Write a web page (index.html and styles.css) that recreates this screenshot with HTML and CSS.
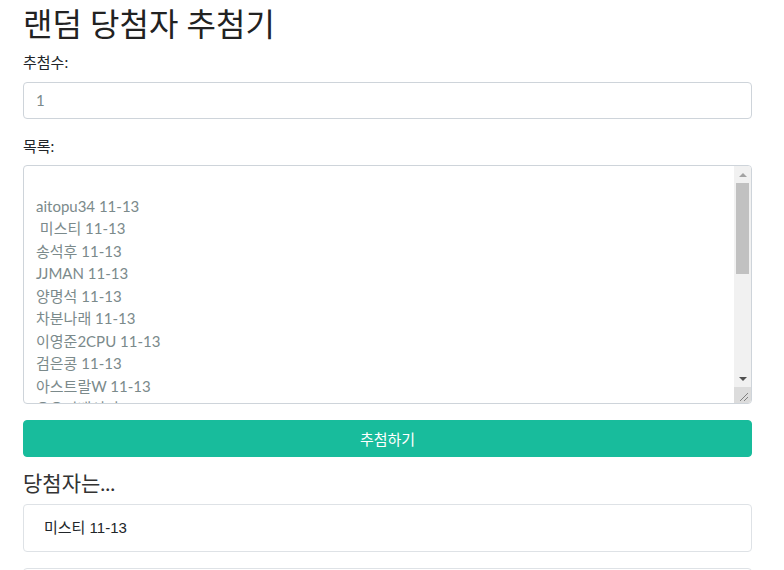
FILE: index.html
```html
<!DOCTYPE html>
<html lang="ko">
<head>
<meta charset="utf-8">
<title>랜덤 당첨자 추첨기</title>
<link rel="stylesheet" href="styles.css">
</head>
<body>
<div class="container">
  <h1 class="title">랜덤 당첨자 추첨기</h1>
  <div class="form-group">
    <label class="label" for="count">추첨수:</label>
    <input class="form-control" id="count" type="text" value="1">
  </div>
  <div class="form-group">
    <label class="label" for="list">목록:</label>
    <div class="textarea-wrap">
      <textarea class="form-control list" id="list" rows="10">

aitopu34 11-13
 미스티 11-13
송석후 11-13
JJMAN 11-13
양명석 11-13
차분나래 11-13
이영준2CPU 11-13
검은콩 11-13
아스트랄W 11-13
으으피배서너 11-13
하늘바람 11-13
민트초코 11-13
달빛소나타 11-13
김철수 11-13
코딩왕 11-13
파란하늘 11-13
별헤는밤 11-13
라이언 11-13
푸른바다 11-13
초록나무 11-13</textarea>
      <div class="scrollbar" aria-hidden="true">
        <div class="sb-btn"><span class="tri-up"></span></div>
        <div class="sb-track"><div class="sb-thumb"></div></div>
        <div class="sb-btn"><span class="tri-down"></span></div>
        <div class="sb-resizer">
          <svg width="16" height="16" viewBox="0 0 16 16"><path d="M6 14 L14 6 M10 14 L14 10" stroke="#808080" stroke-width="1" fill="none"/></svg>
        </div>
      </div>
    </div>
  </div>
  <button class="btn" type="button">추첨하기</button>
  <h4 class="result-title">당첨자는...</h4>
  <ul class="list-group">
    <li class="list-group-item">미스티 11-13</li>
  </ul>
  <ul class="list-group">
    <li class="list-group-item">&nbsp;</li>
  </ul>
</div>
</body>
</html>
```

FILE: styles.css
```css
html, body {
  margin: 0;
  padding: 0;
  background: #fff;
}
body {
  font-family: Lato, "Noto Sans CJK KR", sans-serif;
  font-size: 15px;
  line-height: 1.5;
  color: #212529;
  overflow: hidden;
}
.container {
  padding: 0 32px 0 23px;
}
.title {
  margin: 0 0 8px 0;
  padding-top: 5px;
  font-size: 32px;
  font-weight: 400;
  line-height: 1.2;
  color: #222;
}
.form-group {
  margin-bottom: 16px;
}
.label {
  display: inline-block;
  margin-bottom: 8px;
  font-size: 15px;
  color: #212529;
}
.form-control {
  display: block;
  box-sizing: border-box;
  width: 100%;
  margin: 0;
  padding: 6px 12px;
  font-family: Lato, "Noto Sans CJK KR", sans-serif;
  font-size: 15px;
  line-height: 1.5;
  color: #7b8a8b;
  background: #fff;
  border: 1px solid #ced4da;
  border-radius: 4px;
  outline: none;
}
input.form-control {
  height: 37px;
}
.textarea-wrap {
  position: relative;
}
.list {
  height: 239px;
  resize: none;
  overflow: hidden;
  padding-right: 30px;
}
.scrollbar {
  position: absolute;
  top: 1px;
  right: 1px;
  bottom: 1px;
  width: 17px;
  display: flex;
  flex-direction: column;
  background: #f1f1f1;
  border-radius: 0 3px 3px 0;
  overflow: hidden;
}
.sb-btn {
  height: 17px;
  flex: 0 0 17px;
  display: flex;
  align-items: center;
  justify-content: center;
}
.tri-up {
  width: 0;
  height: 0;
  border-left: 4px solid transparent;
  border-right: 4px solid transparent;
  border-bottom: 4px solid #a3a3a3;
}
.tri-down {
  width: 0;
  height: 0;
  border-left: 4px solid transparent;
  border-right: 4px solid transparent;
  border-top: 4px solid #505050;
}
.sb-track {
  flex: 1 1 auto;
  padding: 0 2px;
}
.sb-thumb {
  height: 91px;
  background: #c1c1c1;
}
.sb-resizer {
  flex: 0 0 16px;
  height: 16px;
  background: #dcdcdc;
}
.sb-resizer svg {
  display: block;
}
.btn {
  display: block;
  box-sizing: border-box;
  width: 100%;
  height: 37px;
  padding: 6px 12px;
  font-family: Lato, "Noto Sans CJK KR", sans-serif;
  font-size: 15px;
  line-height: 1.5;
  color: #fff;
  background: #18bc9c;
  border: 1px solid #18bc9c;
  border-radius: 4px;
}
.result-title {
  margin: 13px 0 8px 0;
  font-size: 21px;
  font-weight: 400;
  line-height: 1.2;
  color: #333;
}
.list-group {
  list-style: none;
  margin: 0 0 16px 0;
  padding: 0;
}
.list-group-item {
  padding: 12px 20px;
  border: 1px solid #dee2e6;
  border-radius: 4px;
  font-family: "Liberation Sans", "Noto Sans CJK KR", sans-serif;
  font-size: 15px;
  line-height: 1.5;
  color: #212529;
}
```
